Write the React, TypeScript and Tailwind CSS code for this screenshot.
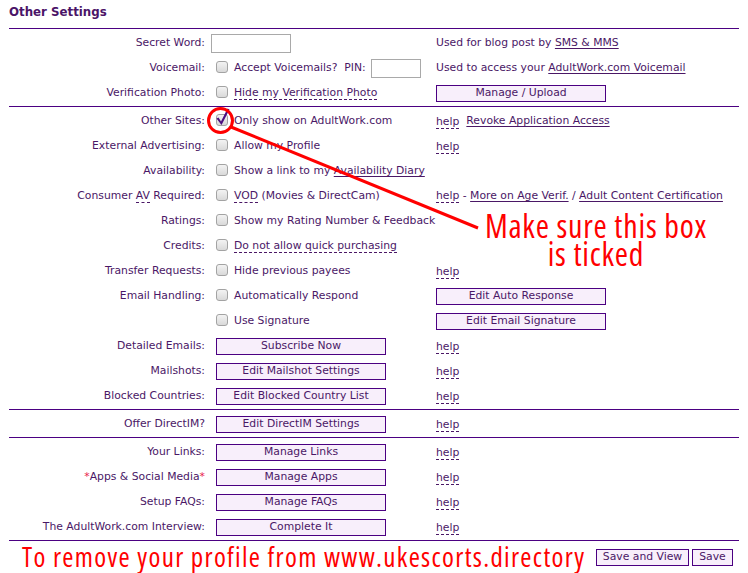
import type { ReactNode } from "react";

const Box = ({ checked = false }: { checked?: boolean }) => (
  <span className="relative ml-[5px] mb-[4px] inline-block h-[12px] w-[12px] shrink-0 rounded-[3px] border border-[#a3a3a3] bg-linear-to-b from-[#f3f3f3] to-[#d9d9d9]">
    {checked && (
      <svg className="absolute -left-[2px] -top-[8px]" width="16" height="20" viewBox="0 0 16 20">
        <path d="M1.5 11.5 L3.5 10.5 L6 14.5 L12.5 1.5 L14.5 2.5 L6.5 18 Z" fill="#4b0f80" />
      </svg>
    )}
  </span>
);

const Dash = ({ children }: { children: ReactNode }) => (
  <span className="inline-block border-b border-dashed border-[#4a1766] leading-[13px]">{children}</span>
);

const Link = ({ children }: { children: ReactNode }) => (
  <span className="underline underline-offset-2">{children}</span>
);

const Btn = ({ children }: { children: ReactNode }) => (
  <span className="inline-flex h-[17px] w-[170px] shrink-0 items-center justify-center border border-[#4b0082] bg-[#f8effb] leading-none">
    {children}
  </span>
);

const SmallBtn = ({ children, className }: { children: ReactNode; className: string }) => (
  <span
    className={`inline-flex h-[17px] shrink-0 items-center justify-center border border-[#4b0082] bg-[#f8effb] leading-none ${className}`}
  >
    {children}
  </span>
);

const Check = ({ checked, children }: { checked?: boolean; children: ReactNode }) => (
  <div className="flex items-center whitespace-nowrap">
    <Box checked={checked} />
    <span className="ml-[6px]">{children}</span>
  </div>
);

const Row = ({ label, mid, right }: { label?: ReactNode; mid?: ReactNode; right?: ReactNode }) => (
  <div className="flex h-[25px] items-center whitespace-nowrap">
    <div className="w-[196px] shrink-0 text-right">{label}</div>
    <div className="ml-[6px] flex w-[225px] shrink-0 items-center">{mid}</div>
    <div className="flex items-center">{right}</div>
  </div>
);

const Section = ({ children }: { children: ReactNode }) => (
  <div className="border-t border-[#4b0082] pt-[2px]">{children}</div>
);

const MidBtn = ({ children }: { children: ReactNode }) => (
  <span className="ml-[5px] flex">
    <Btn>{children}</Btn>
  </span>
);

export default function App() {
  return (
    <div className="relative h-[573px] w-[748px] overflow-hidden bg-white font-['DejaVu_Sans',sans-serif] text-[10.8px] text-[#4a1766]">
      <div className="mx-[9px]">
        <div className="flex h-[28px] items-center pb-[3px] text-[11.8px] font-bold text-[#4b1468]">Other Settings</div>

        <Section>
          <Row
            label="Secret Word:"
            mid={<span className="block h-[19px] w-[80px] border border-[#a9a9a9] bg-white" />}
            right={
              <span>
                Used for blog post by <Link>SMS &amp; MMS</Link>
              </span>
            }
          />
          <Row
            label="Voicemail:"
            mid={
              <div className="flex items-center whitespace-nowrap">
                <Box />
                <span className="ml-[6px]">Accept Voicemails?&nbsp; PIN:</span>
                <span className="ml-[5px] block h-[19px] w-[50px] border border-[#a9a9a9] bg-white" />
              </div>
            }
            right={
              <span>
                Used to access your <Link>AdultWork.com Voicemail</Link>
              </span>
            }
          />
          <Row
            label="Verification Photo:"
            mid={
              <Check>
                <Dash>Hide my Verification Photo</Dash>
              </Check>
            }
            right={<Btn>Manage / Upload</Btn>}
          />
        </Section>

        <Section>
          <Row
            label="Other Sites:"
            mid={<Check checked>Only show on AdultWork.com</Check>}
            right={
              <>
                <Dash>help</Dash>
                <span className="ml-[7px]">
                  <Link>Revoke Application Access</Link>
                </span>
              </>
            }
          />
          <Row label="External Advertising:" mid={<Check>Allow my Profile</Check>} right={<Dash>help</Dash>} />
          <Row
            label="Availability:"
            mid={
              <Check>
                Show a link to my <Link>Availability Diary</Link>
              </Check>
            }
          />
          <Row
            label={
              <>
                Consumer <Dash>AV</Dash> Required:
              </>
            }
            mid={
              <Check>
                <Dash>VOD</Dash> (Movies &amp; DirectCam)
              </Check>
            }
            right={
              <span>
                <Dash>help</Dash> - <Link>More on Age Verif.</Link> / <Link>Adult Content Certification</Link>
              </span>
            }
          />
          <Row label="Ratings:" mid={<Check>Show my Rating Number &amp; Feedback</Check>} />
          <Row
            label="Credits:"
            mid={
              <Check>
                <Dash>Do not allow quick purchasing</Dash>
              </Check>
            }
          />
          <Row label="Transfer Requests:" mid={<Check>Hide previous payees</Check>} right={<Dash>help</Dash>} />
          <Row label="Email Handling:" mid={<Check>Automatically Respond</Check>} right={<Btn>Edit Auto Response</Btn>} />
          <Row mid={<Check>Use Signature</Check>} right={<Btn>Edit Email Signature</Btn>} />
          <Row label="Detailed Emails:" mid={<MidBtn>Subscribe Now</MidBtn>} right={<Dash>help</Dash>} />
          <Row label="Mailshots:" mid={<MidBtn>Edit Mailshot Settings</MidBtn>} right={<Dash>help</Dash>} />
          <Row label="Blocked Countries:" mid={<MidBtn>Edit Blocked Country List</MidBtn>} right={<Dash>help</Dash>} />
        </Section>

        <Section>
          <Row label="Offer DirectIM?" mid={<MidBtn>Edit DirectIM Settings</MidBtn>} right={<Dash>help</Dash>} />
        </Section>

        <Section>
          <Row label="Your Links:" mid={<MidBtn>Manage Links</MidBtn>} right={<Dash>help</Dash>} />
          <Row
            label={
              <>
                <span className="text-[#e8204a]">*</span>Apps &amp; Social Media<span className="text-[#e8204a]">*</span>
              </>
            }
            mid={<MidBtn>Manage Apps</MidBtn>}
            right={<Dash>help</Dash>}
          />
          <Row label="Setup FAQs:" mid={<MidBtn>Manage FAQs</MidBtn>} right={<Dash>help</Dash>} />
          <Row label="The AdultWork.com Interview:" mid={<MidBtn>Complete It</MidBtn>} right={<Dash>help</Dash>} />
        </Section>

        <div className="flex h-[32px] items-center justify-between whitespace-nowrap border-t border-[#4b0082] pl-[13px] pr-[6px]">
          <span className="shrink-0 font-['Open_Sans',sans-serif] text-[27px] leading-[31px] tracking-[1.3px] text-[#ff0000] [font-stretch:75%]">
            To remove your profile from www.ukescorts.directory
          </span>
          <div className="flex shrink-0 items-center gap-[3px] pt-[1px]">
            <SmallBtn className="w-[93px]">Save and View</SmallBtn>
            <SmallBtn className="w-[41px]">Save</SmallBtn>
          </div>
        </div>
      </div>

      <svg className="pointer-events-none absolute left-0 top-0" width="748" height="573">
        <circle cx="220.5" cy="120.5" r="12" fill="none" stroke="#ff0000" strokeWidth="3" />
        <line x1="231" y1="127" x2="478" y2="228" stroke="#ff0000" strokeWidth="3" />
      </svg>

      <div className="pointer-events-none absolute left-[478px] top-[212px] w-[236px] whitespace-nowrap text-center font-['Open_Sans',sans-serif] text-[32px] leading-[28px] tracking-[0.8px] text-[#ff0000] [font-stretch:75%]">
        Make sure this box
        <br />
        is ticked
      </div>
    </div>
  );
}
